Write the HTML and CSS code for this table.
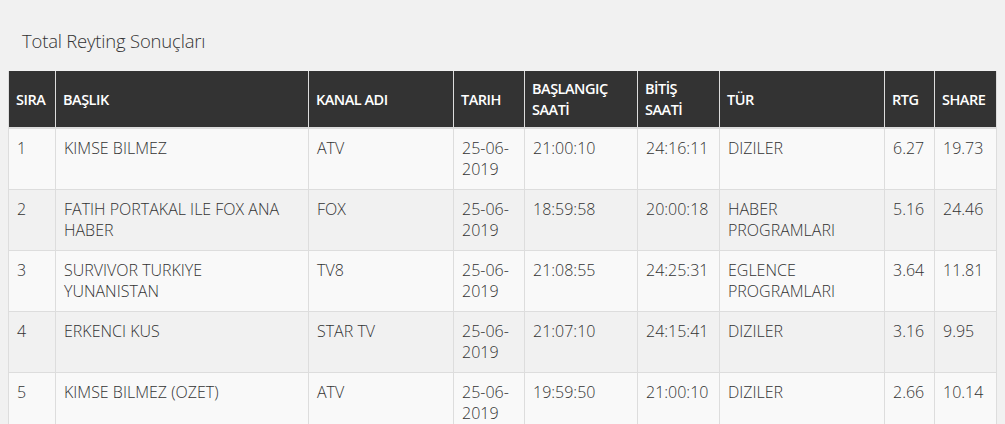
FILE: index.html
```html
<!DOCTYPE html>
<html lang="tr">
<head>
<meta charset="utf-8">
<title>Total Reyting Sonuçları</title>
<link rel="stylesheet" href="styles.css">
</head>
<body>
<h2 class="title">Total Reyting Sonuçları</h2>
<table class="ratings">
  <colgroup>
    <col class="c-sira"><col class="c-baslik"><col class="c-kanal"><col class="c-tarih"><col class="c-bas"><col class="c-bitis"><col class="c-tur"><col class="c-rtg"><col class="c-share">
  </colgroup>
  <thead>
    <tr>
      <th>SIRA</th><th>BAŞLIK</th><th>KANAL ADI</th><th>TARIH</th><th>BAŞLANGIÇ SAATİ</th><th>BİTİŞ SAATİ</th><th>TÜR</th><th>RTG</th><th>SHARE</th>
    </tr>
  </thead>
  <tbody>
    <tr><td>1</td><td>KIMSE BILMEZ</td><td>ATV</td><td>25-06-2019</td><td>21:00:10</td><td>24:16:11</td><td>DIZILER</td><td>6.27</td><td>19.73</td></tr>
    <tr><td>2</td><td>FATIH PORTAKAL ILE FOX ANA HABER</td><td>FOX</td><td>25-06-2019</td><td>18:59:58</td><td>20:00:18</td><td>HABER PROGRAMLARI</td><td>5.16</td><td>24.46</td></tr>
    <tr><td>3</td><td>SURVIVOR TURKIYE YUNANISTAN</td><td>TV8</td><td>25-06-2019</td><td>21:08:55</td><td>24:25:31</td><td>EGLENCE PROGRAMLARI</td><td>3.64</td><td>11.81</td></tr>
    <tr><td>4</td><td>ERKENCI KUS</td><td>STAR TV</td><td>25-06-2019</td><td>21:07:10</td><td>24:15:41</td><td>DIZILER</td><td>3.16</td><td>9.95</td></tr>
    <tr><td>5</td><td>KIMSE BILMEZ (OZET)</td><td>ATV</td><td>25-06-2019</td><td>19:59:50</td><td>21:00:10</td><td>DIZILER</td><td>2.66</td><td>10.14</td></tr>
  </tbody>
</table>
</body>
</html>
```
FILE: styles.css
```css
html, body {
  margin: 0;
  padding: 0;
  background: #f1f1f1;
}
body {
  padding: 0 8px;
  font-family: "Open Sans", "Liberation Sans", sans-serif;
  color: #333;
}
.title {
  margin: 0;
  padding: 29px 0 0 14px;
  height: 71px;
  box-sizing: border-box;
  font-size: 18.5px;
  font-weight: 300;
  line-height: 24px;
  color: #333;
  letter-spacing: -0.2px;
}
.ratings {
  width: 988px;
  border-collapse: collapse;
  table-layout: fixed;
}
.c-sira { width: 47px; }
.c-baslik { width: 253px; }
.c-kanal { width: 145px; }
.c-tarih { width: 71px; }
.c-bas { width: 113px; }
.c-bitis { width: 82px; }
.c-tur { width: 165px; }
.c-rtg { width: 50px; }
.c-share { width: 62px; }
.ratings th {
  background: #333;
  color: #fff;
  text-align: left;
  font-size: 14.5px;
  font-weight: 600;
  letter-spacing: -0.5px;
  line-height: 21px;
  padding: 7px 7px 7px 7px;
  height: 57px;
  box-sizing: border-box;
  border: 1px solid #ddd;
  border-top: 0;
  border-bottom: 2px solid #ddd;
  vertical-align: middle;
}
.ratings td {
  font-size: 16px;
  font-weight: 300;
  line-height: 21px;
  padding: 9px 7px 9px 8px;
  height: 60px;
  box-sizing: border-box;
  vertical-align: top;
  border: 1px solid #ddd;
  letter-spacing: 0;
}
.ratings tbody tr:nth-child(odd) td { background: #f9f9f9; }
.ratings tbody tr:nth-child(even) td { background: #f1f1f1; }
```
